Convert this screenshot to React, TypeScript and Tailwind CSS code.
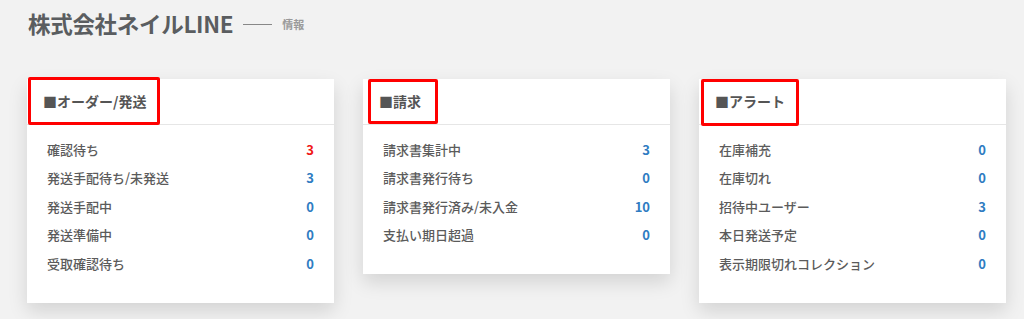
import React from 'react';

type Row = { label: string; value: number; alert?: boolean };

type Panel = {
  title: string;
  rows: Row[];
  // hand-drawn red annotation around the heading
  markClass: string;
};

const PANELS: Panel[] = [
  {
    title: '■オーダー/発送',
    markClass: 'left-[1px] -top-[2px] w-[132px] h-[48px]',
    rows: [
      { label: '確認待ち', value: 3, alert: true },
      { label: '発送手配待ち/未発送', value: 3 },
      { label: '発送手配中', value: 0 },
      { label: '発送準備中', value: 0 },
      { label: '受取確認待ち', value: 0 },
    ],
  },
  {
    title: '■請求',
    markClass: 'left-[5px] top-0 w-[70px] h-[45px]',
    rows: [
      { label: '請求書集計中', value: 3 },
      { label: '請求書発行待ち', value: 0 },
      { label: '請求書発行済み/未入金', value: 10 },
      { label: '支払い期日超過', value: 0 },
    ],
  },
  {
    title: '■アラート',
    markClass: 'left-[2px] top-0 w-[98px] h-[47px]',
    rows: [
      { label: '在庫補充', value: 0 },
      { label: '在庫切れ', value: 0 },
      { label: '招待中ユーザー', value: 3 },
      { label: '本日発送予定', value: 0 },
      { label: '表示期限切れコレクション', value: 0 },
    ],
  },
];

const Card: React.FC<{ panel: Panel }> = ({ panel }) => (
  <div className="relative w-[307px] shrink-0 bg-white shadow-[0_8px_18px_rgba(0,0,0,0.13)]">
    <div className="h-[46px] flex items-center pl-[16px] border-b border-[#e6e6e6] text-[14px] font-bold text-[#555]">
      {panel.title}
    </div>
    <div className="pt-[10px] pb-[25px] px-[20px]">
      {panel.rows.map((r) => (
        <div key={r.label} className="h-[28.5px] flex items-center justify-between text-[13px] font-medium">
          <span className="text-[#5b5b5b]">{r.label}</span>
          <span className={`font-bold ${r.alert ? 'text-[#f01818]' : 'text-[#2f7cc2]'}`}>{r.value}</span>
        </div>
      ))}
    </div>
    <div className={`absolute ${panel.markClass} border-[3px] border-[#ff0000] rounded-[2px] pointer-events-none`} />
  </div>
);

const App: React.FC = () => (
  <div
    className="w-full h-[319px] overflow-hidden bg-[#f2f2f2] antialiased"
    style={{ fontFamily: '"Noto Sans CJK JP", "Noto Sans", sans-serif' }}
  >
    <div className="h-[79px] pl-[28px] pt-[7px]">
      <div className="flex items-center h-[34px]">
        <h1 className="text-[22.5px] font-bold text-[#5a5d60] tracking-[-0.3px]">株式会社ネイルLINE</h1>
        <div className="w-[29px] h-px bg-[#888] ml-[10px]" />
        <span className="ml-[10px] text-[11px] font-bold text-[#9a9a9a]">情報</span>
      </div>
    </div>
    <div className="flex items-start gap-[29px] pl-[27px]">
      {PANELS.map((p) => (
        <Card key={p.title} panel={p} />
      ))}
    </div>
  </div>
);

export default App;
